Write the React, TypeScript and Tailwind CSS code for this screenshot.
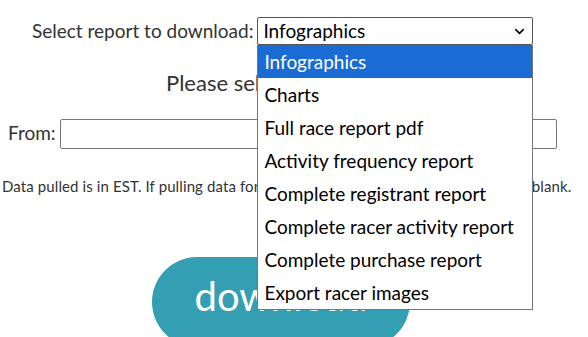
import { ChevronDown } from 'lucide-react'

const options = [
  'Infographics',
  'Charts',
  'Full race report pdf',
  'Activity frequency report',
  'Complete registrant report',
  'Complete racer activity report',
  'Complete purchase report',
  'Export racer images',
]

export default function App() {
  return (
    <div
      className="relative w-[588px] h-[337px] overflow-hidden bg-white text-[#333]"
      style={{ fontFamily: 'Lato, "Open Sans", sans-serif' }}
    >
      <div className="flex items-center pt-[17px] pl-[32px]">
        <span className="text-[19px] mr-[4px]">Select report to download:</span>
        <div className="relative">
          <div className="flex items-center justify-between w-[276px] h-[28px] border border-[#555] rounded-[2px] pl-[5px] pr-[5px] text-[19px] text-black">
            <span>Infographics</span>
            <ChevronDown size={15} strokeWidth={2.5} />
          </div>
          <ul className="absolute left-0 top-[28px] z-10 w-[276px] bg-white border border-[#767676] border-t-0">
            {options.map((o, i) => (
              <li
                key={o}
                className={`h-[33px] flex items-center pl-[6px] text-[19px] ${
                  i === 0 ? 'bg-[#1a6bd4] text-white' : 'text-black'
                }`}
              >
                {o}
              </li>
            ))}
          </ul>
        </div>
      </div>

      <p className="mt-[20px] pl-[166px] text-[22px]">Please select a date range</p>

      <div className="flex items-center mt-[20px] pl-[8px]">
        <span className="text-[19px] mr-[4px]">From:</span>
        <input className="w-[497px] h-[30px] border border-[#767676] rounded-[2px]" />
      </div>

      <p className="mt-[26px] pl-[2px] text-[15px] tracking-[0.11px] whitespace-nowrap">
        Data pulled is in EST. If pulling data for the full season, leave From and To fields blank.
      </p>

      <div className="mt-[60px] ml-[152px] w-[258px] h-[90px] rounded-full bg-[#349fb3] flex justify-center pt-[9px] text-white text-[40px]">
        download
      </div>
    </div>
  )
}
